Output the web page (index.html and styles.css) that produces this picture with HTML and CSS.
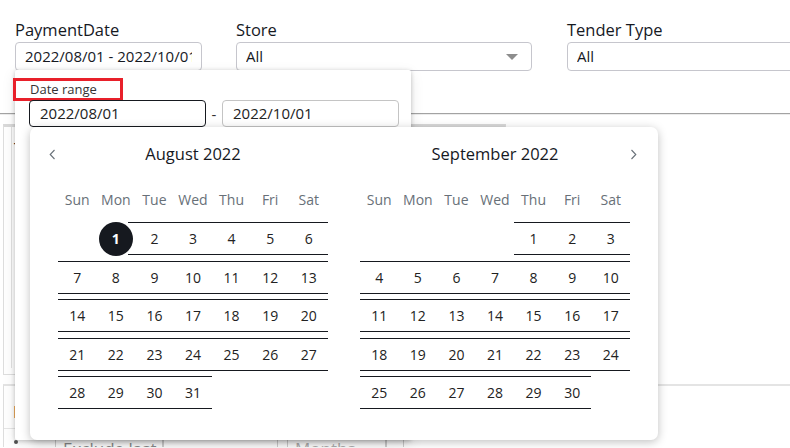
FILE: index.html
```html
<!DOCTYPE html>
<html lang="en">
<head>
  <meta charset="UTF-8">
  <title>PaymentDate filter</title>
  <link rel="stylesheet" href="styles.css">
</head>
<body>
  <div id="filters">
    <div class="filter f-date">
      <label>PaymentDate</label>
      <div class="field"><span class="value">2022/08/01 - 2022/10/01</span></div>
    </div>
    <div class="filter f-store">
      <label>Store</label>
      <div class="field select"><span class="value">All</span><span class="caret"></span></div>
    </div>
    <div class="filter f-tender">
      <label>Tender Type</label>
      <div class="field"><span class="value">All</span></div>
    </div>
  </div>

  <div class="divider"></div>

  <div class="panel panel-a">
    <div class="panel-inner">
      <div class="panel-title">Transactions</div>
    </div>
  </div>

  <div class="panel panel-b">
    <div class="panel-title red">Last</div>
    <div class="rule"></div>
    <div class="param-row">
      <span class="dot"></span>
      <div class="param">Exclude last</div>
      <div class="param wide"></div>
      <div class="param unit">Months</div>
      <div class="param tiny"></div>
    </div>
  </div>

  <div id="range-pop">
    <div class="range-label">Date range</div>
    <div class="range-row">
      <div class="date-input active">2022/08/01</div>
      <span class="dash">-</span>
      <div class="date-input">2022/10/01</div>
    </div>
  </div>

  <div id="calendar">
    <div class="month" id="m1"></div>
    <div class="month" id="m2"></div>
  </div>

  <script>
    const dayNames = ["Sun", "Mon", "Tue", "Wed", "Thu", "Fri", "Sat"];

    // first weekday, number of days
    const months = [
      { id: "m1", title: "August 2022", start: 1, days: 31, nav: "prev" },
      { id: "m2", title: "September 2022", start: 4, days: 30, nav: "next" }
    ];

    const chevrons = {
      prev: '<svg width="7" height="11" viewBox="0 0 7 11"><polyline points="5.5,1 1.2,5.5 5.5,10" fill="none" stroke="#687078" stroke-width="1.1"/></svg>',
      next: '<svg width="7" height="11" viewBox="0 0 7 11"><polyline points="1.5,1 5.8,5.5 1.5,10" fill="none" stroke="#687078" stroke-width="1.1"/></svg>'
    };

    months.forEach(m => {
      const box = document.getElementById(m.id);
      let html = '<div class="month-title">' + m.title +
        '<span class="nav ' + m.nav + '">' + chevrons[m.nav] + '</span></div>';
      html += '<div class="days head">';
      dayNames.forEach(d => html += '<span>' + d + '</span>');
      html += '</div><div class="days weeks">';
      for (let i = 0; i < m.start; i++) html += '<span class="empty"></span>';
      for (let d = 1; d <= m.days; d++) {
        if (m.id === "m1" && d === 1) {
          html += '<span class="date sel"><b>1</b></span>';
        } else {
          html += '<span class="date">' + d + '</span>';
        }
      }
      html += '</div>';
      box.innerHTML = html;
    });
  </script>
</body>
</html>
```

FILE: styles.css
```css
* { box-sizing: border-box; }
body { margin: 0; width: 790px; height: 448px; overflow: hidden; position: relative; background: #fff; color: #16191f; font-family: "Open Sans", "Noto Sans", sans-serif; }

#filters { display: flex; gap: 34px; padding: 19px 0 0 15px; }
.filter { flex-shrink: 0; }
.filter label { display: block; font-size: 16.5px; line-height: 22px; margin-bottom: 1px; }
.field { height: 29px; border: 1px solid #c6c6cd; border-radius: 4px; padding: 0 9px; font-size: 15px; line-height: 27px; white-space: nowrap; }
.field .value { display: block; overflow: hidden; }
.f-date .field { width: 187px; }
.f-store .field { width: 296px; }
.f-tender { margin-left: 1px; }
.f-tender .field { width: 240px; }
.select { display: flex; justify-content: space-between; align-items: center; }
.caret { width: 0; height: 0; border-left: 6px solid transparent; border-right: 6px solid transparent; border-top: 6px solid #8d8d8d; margin-right: 4px; }

.divider { margin-top: 42px; border-top: 1px solid #a3a3a3; box-shadow: 0 1px 0 #ececec; }

.panel { margin-left: 3px; }
.panel-a { margin-top: 10px; width: 503px; height: 251px; border: 1px solid #dedede; border-top: 3px solid #d9d9d9; padding: 0 0 6px 7px; }
.panel-inner { height: 100%; border-left: 1px solid #e3e3e3; padding: 10px 0 0 2px; }
.panel-title { font-size: 17px; line-height: 24px; }
.panel-b { margin-top: 9px; height: 63px; overflow: hidden; border-top: 2px solid #e4e4e4; border-left: 1px solid #dedede; padding: 14px 0 0 9px; }
.panel-title.red { color: #7d2414; }
.rule { margin: 4px 0 0 -9px; border-top: 1px solid #e6e6e6; width: 40px; }
.param-row { display: flex; align-items: flex-start; margin-top: 5px; }
.dot { width: 4px; height: 4px; background: #555; border-radius: 50%; margin: 6px 0 0 1px; }
.param { height: 30px; border: 1px solid #cfcfcf; border-bottom: none; color: #8a8a8a; font-size: 17px; line-height: 28px; padding: 0 7px; white-space: nowrap; overflow: hidden; }
.param:first-of-type { margin-left: 37px; width: 108px; }
.param.wide { width: 115px; }
.param.unit { width: 99px; margin-left: 9px; color: #b0b0b0; }
.param.tiny { width: 18px; }

#range-pop { position: absolute; left: 15px; top: 70px; width: 396px; height: 370px; background: #fff; border-radius: 2px; box-shadow: 0 1px 4px rgba(0, 0, 0, 0.22), 0 4px 14px rgba(0, 0, 0, 0.1); }
.range-label { display: inline-block; margin: 8px 0 0 -2px; height: 23px; border: 3px solid #e8202a; padding: 0 23px 0 14px; font-size: 13px; line-height: 17px; color: #333; }
.range-row { display: flex; align-items: center; margin: -1px 0 0 14px; }
.date-input { width: 177px; height: 27px; border: 1px solid #c4c4c4; border-radius: 4px; padding: 0 10px; font-size: 15px; line-height: 25px; color: #222; }
.date-input.active { border-color: #16191f; }
.dash { width: 16px; text-align: center; font-size: 15px; color: #333; }

#calendar { position: absolute; left: 30px; top: 127px; width: 628px; height: 313px; display: flex; gap: 32px; padding: 16px 28px 0; background: #fff; border-radius: 7px; box-shadow: 0 2px 10px rgba(0, 0, 0, 0.25); }
.month { width: 270px; }
.month-title { position: relative; text-align: center; font-size: 16.5px; line-height: 22px; }
.nav { position: absolute; top: 6px; line-height: 0; }
.nav.prev { left: -9px; }
.nav.next { right: -7px; }
.days { display: grid; grid-template-columns: repeat(7, 1fr); text-align: center; font-size: 14px; }
.head { margin-top: 24px; line-height: 22px; color: #687078; }
.weeks { margin-top: 11px; grid-auto-rows: 33px; row-gap: 5.5px; }
.date { display: flex; align-items: center; justify-content: center; border-top: 1px solid #16191f; border-bottom: 1px solid #16191f; color: #222; }
.date.sel { border-color: transparent; background: linear-gradient(#16191f, #16191f) right -1px top -1px / 8px 1px no-repeat, linear-gradient(#16191f, #16191f) right -1px bottom -1px / 8px 1px no-repeat; }
.date.sel b { flex-shrink: 0; width: 34px; height: 34px; border-radius: 50%; background: #16191f; color: #fff; display: flex; align-items: center; justify-content: center; font-weight: 700; }
```
